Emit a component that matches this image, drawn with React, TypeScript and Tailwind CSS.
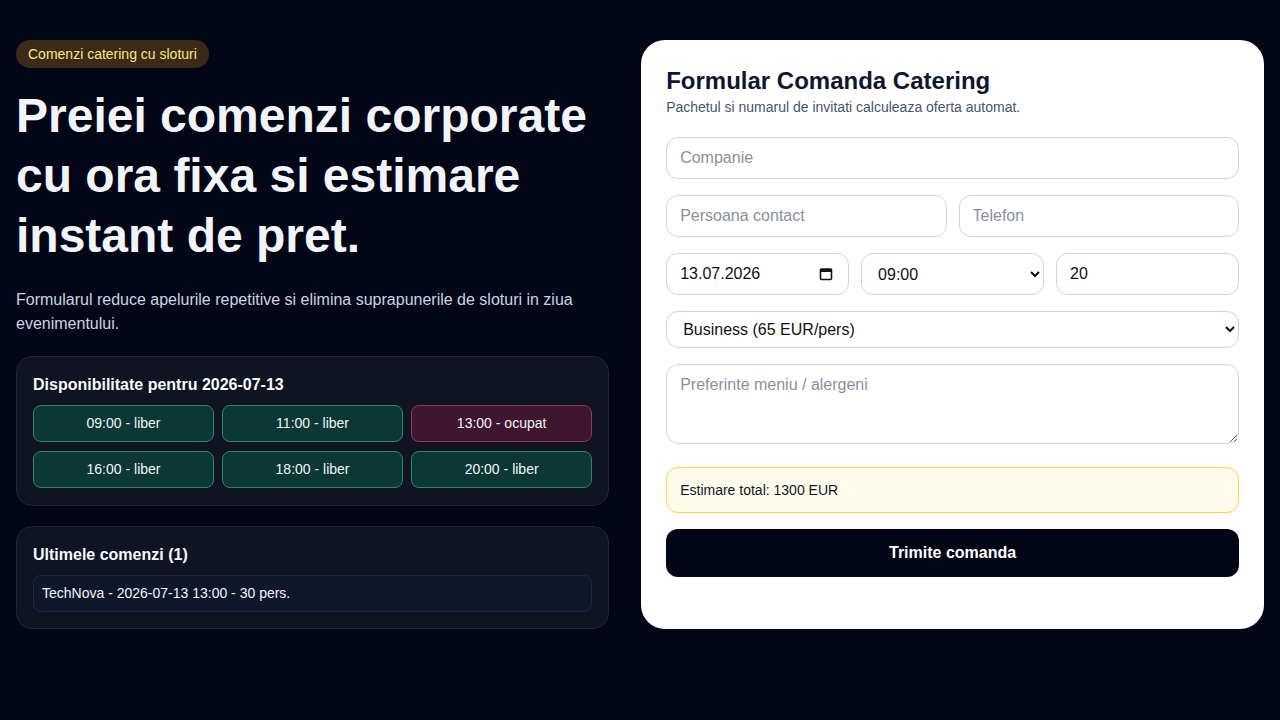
import React from "react";

const slots = [
  { t: "09:00", busy: false },
  { t: "11:00", busy: false },
  { t: "13:00", busy: true },
  { t: "16:00", busy: false },
  { t: "18:00", busy: false },
  { t: "20:00", busy: false },
];

export default function App() {
  return (
    <div
      className="min-h-[720px] w-full bg-[#020617] text-[#f1f5f9]"
      style={{ fontFamily: '"Liberation Sans", Arial, sans-serif' }}
    >
      <div className="grid grid-cols-[1fr_1.05fr] gap-8 px-4 pt-10 pb-10">
        {/* Left column */}
        <div className="flex flex-col">
          <div>
            <span className="inline-flex h-[28px] items-center rounded-full bg-[#3a2a16] px-3 text-[14px] text-[#fde68a]">
              Comenzi catering cu sloturi
            </span>
          </div>
          <h1 className="mt-[18px] text-[48px] font-bold leading-[60px] text-[#f1f5f9]">
            Preiei comenzi corporate cu ora fixa si estimare instant de pret.
          </h1>
          <p className="mt-[22px] text-[16px] leading-6 text-[#cbd5e1]">
            Formularul reduce apelurile repetitive si elimina suprapunerile de sloturi in ziua evenimentului.
          </p>

          <div className="mt-[20px] rounded-2xl border border-[#1f2637] bg-[#0f1322] px-4 pt-4 pb-[17px]">
            <h2 className="text-[16px] font-bold leading-6 text-[#f8fafc]">
              Disponibilitate pentru 2026-07-13
            </h2>
            <div className="mt-2 grid grid-cols-3 gap-x-2 gap-y-[9px]">
              {slots.map((s) => (
                <div
                  key={s.t}
                  className={
                    s.busy
                      ? "flex h-[37px] items-center justify-center rounded-lg border border-[#8c3b58] bg-[#3f1530] text-[14px] text-[#f1f5f9]"
                      : "flex h-[37px] items-center justify-center rounded-lg border border-[#2c8a6c] bg-[#0b3734] text-[14px] text-[#f1f5f9]"
                  }
                >
                  {s.t} - {s.busy ? "ocupat" : "liber"}
                </div>
              ))}
            </div>
          </div>

          <div className="mt-[20px] rounded-2xl border border-[#1f2637] bg-[#0f1322] p-4">
            <h2 className="text-[16px] font-bold leading-6 text-[#f8fafc]">Ultimele comenzi (1)</h2>
            <div className="mt-2 flex h-[37px] items-center rounded-lg border border-[#1f2a3c] bg-[#0f172a] px-2 text-[14px] text-[#f1f5f9]">
              TechNova - 2026-07-13 13:00 - 30 pers.
            </div>
          </div>
        </div>

        {/* Right column */}
        <div className="rounded-[24px] bg-white px-[25px] pt-[26px] pb-[25px] text-[#0f172a]">
          <h2 className="text-[24px] font-bold leading-[30px] text-[#0f172a]">Formular Comanda Catering</h2>
          <p className="mt-[1px] text-[14px] leading-5 text-[#475569]">
            Pachetul si numarul de invitati calculeaza oferta automat.
          </p>

          <div className="mt-5 flex flex-col gap-4">
            <input
              placeholder="Companie"
              className="h-[42px] w-full rounded-xl border border-[#cbd5e1] px-[13px] text-[16px] text-[#111] outline-none placeholder:text-[#8b9099]"
            />
            <div className="grid grid-cols-2 gap-3">
              <input
                placeholder="Persoana contact"
                className="h-[42px] w-full rounded-xl border border-[#cbd5e1] px-[13px] text-[16px] text-[#111] outline-none placeholder:text-[#8b9099]"
              />
              <input
                placeholder="Telefon"
                className="h-[42px] w-full rounded-xl border border-[#cbd5e1] px-[13px] text-[16px] text-[#111] outline-none placeholder:text-[#8b9099]"
              />
            </div>
            <div className="grid grid-cols-3 gap-3">
              <div className="flex h-[42px] w-full items-center justify-between rounded-xl border border-[#cbd5e1] pl-[13px] pr-[15px] text-[16px] text-[#111]">
                <span className="-mt-[1px]">13.07.2026</span>
                <svg width="14" height="14" viewBox="0 0 14 14" aria-hidden="true">
                  <rect x="1.5" y="2" width="11" height="10.5" rx="1" fill="none" stroke="#111" strokeWidth="1.6" />
                  <rect x="1.5" y="2" width="11" height="3" fill="#111" />
                </svg>
              </div>
              <select
                defaultValue="09:00"
                className="h-[42px] w-full rounded-xl border border-[#cbd5e1] bg-white px-3 text-[16px] text-[#111] outline-none"
              >
                <option>09:00</option>
                <option>11:00</option>
                <option>13:00</option>
                <option>16:00</option>
                <option>18:00</option>
                <option>20:00</option>
              </select>
              <input
                defaultValue="20"
                className="h-[42px] w-full rounded-xl border border-[#cbd5e1] px-[13px] text-[16px] text-[#111] outline-none"
              />
            </div>
            <select
              defaultValue="business"
              className="h-[37px] w-full rounded-xl border border-[#cbd5e1] bg-white px-3 text-[16px] text-[#111] outline-none"
            >
              <option value="standard">Standard (45 EUR/pers)</option>
              <option value="business">Business (65 EUR/pers)</option>
              <option value="premium">Premium (90 EUR/pers)</option>
            </select>
            <textarea
              placeholder="Preferinte meniu / alergeni"
              className="mb-[7px] block h-[80px] w-full rounded-xl border border-[#cbd5e1] px-[13px] py-[8px] text-[16px] leading-6 text-[#111] outline-none placeholder:text-[#8b9099]"
            />
            <div className="flex h-[46px] items-center rounded-xl border border-[#fcd34d] bg-[#fffbeb] px-[13px] text-[14px] text-[#111827]">
              Estimare total: 1300 EUR
            </div>
            <button className="h-[48px] w-full rounded-xl bg-[#020617] text-[16px] font-bold text-white">
              Trimite comanda
            </button>
          </div>
        </div>
      </div>
    </div>
  );
}
